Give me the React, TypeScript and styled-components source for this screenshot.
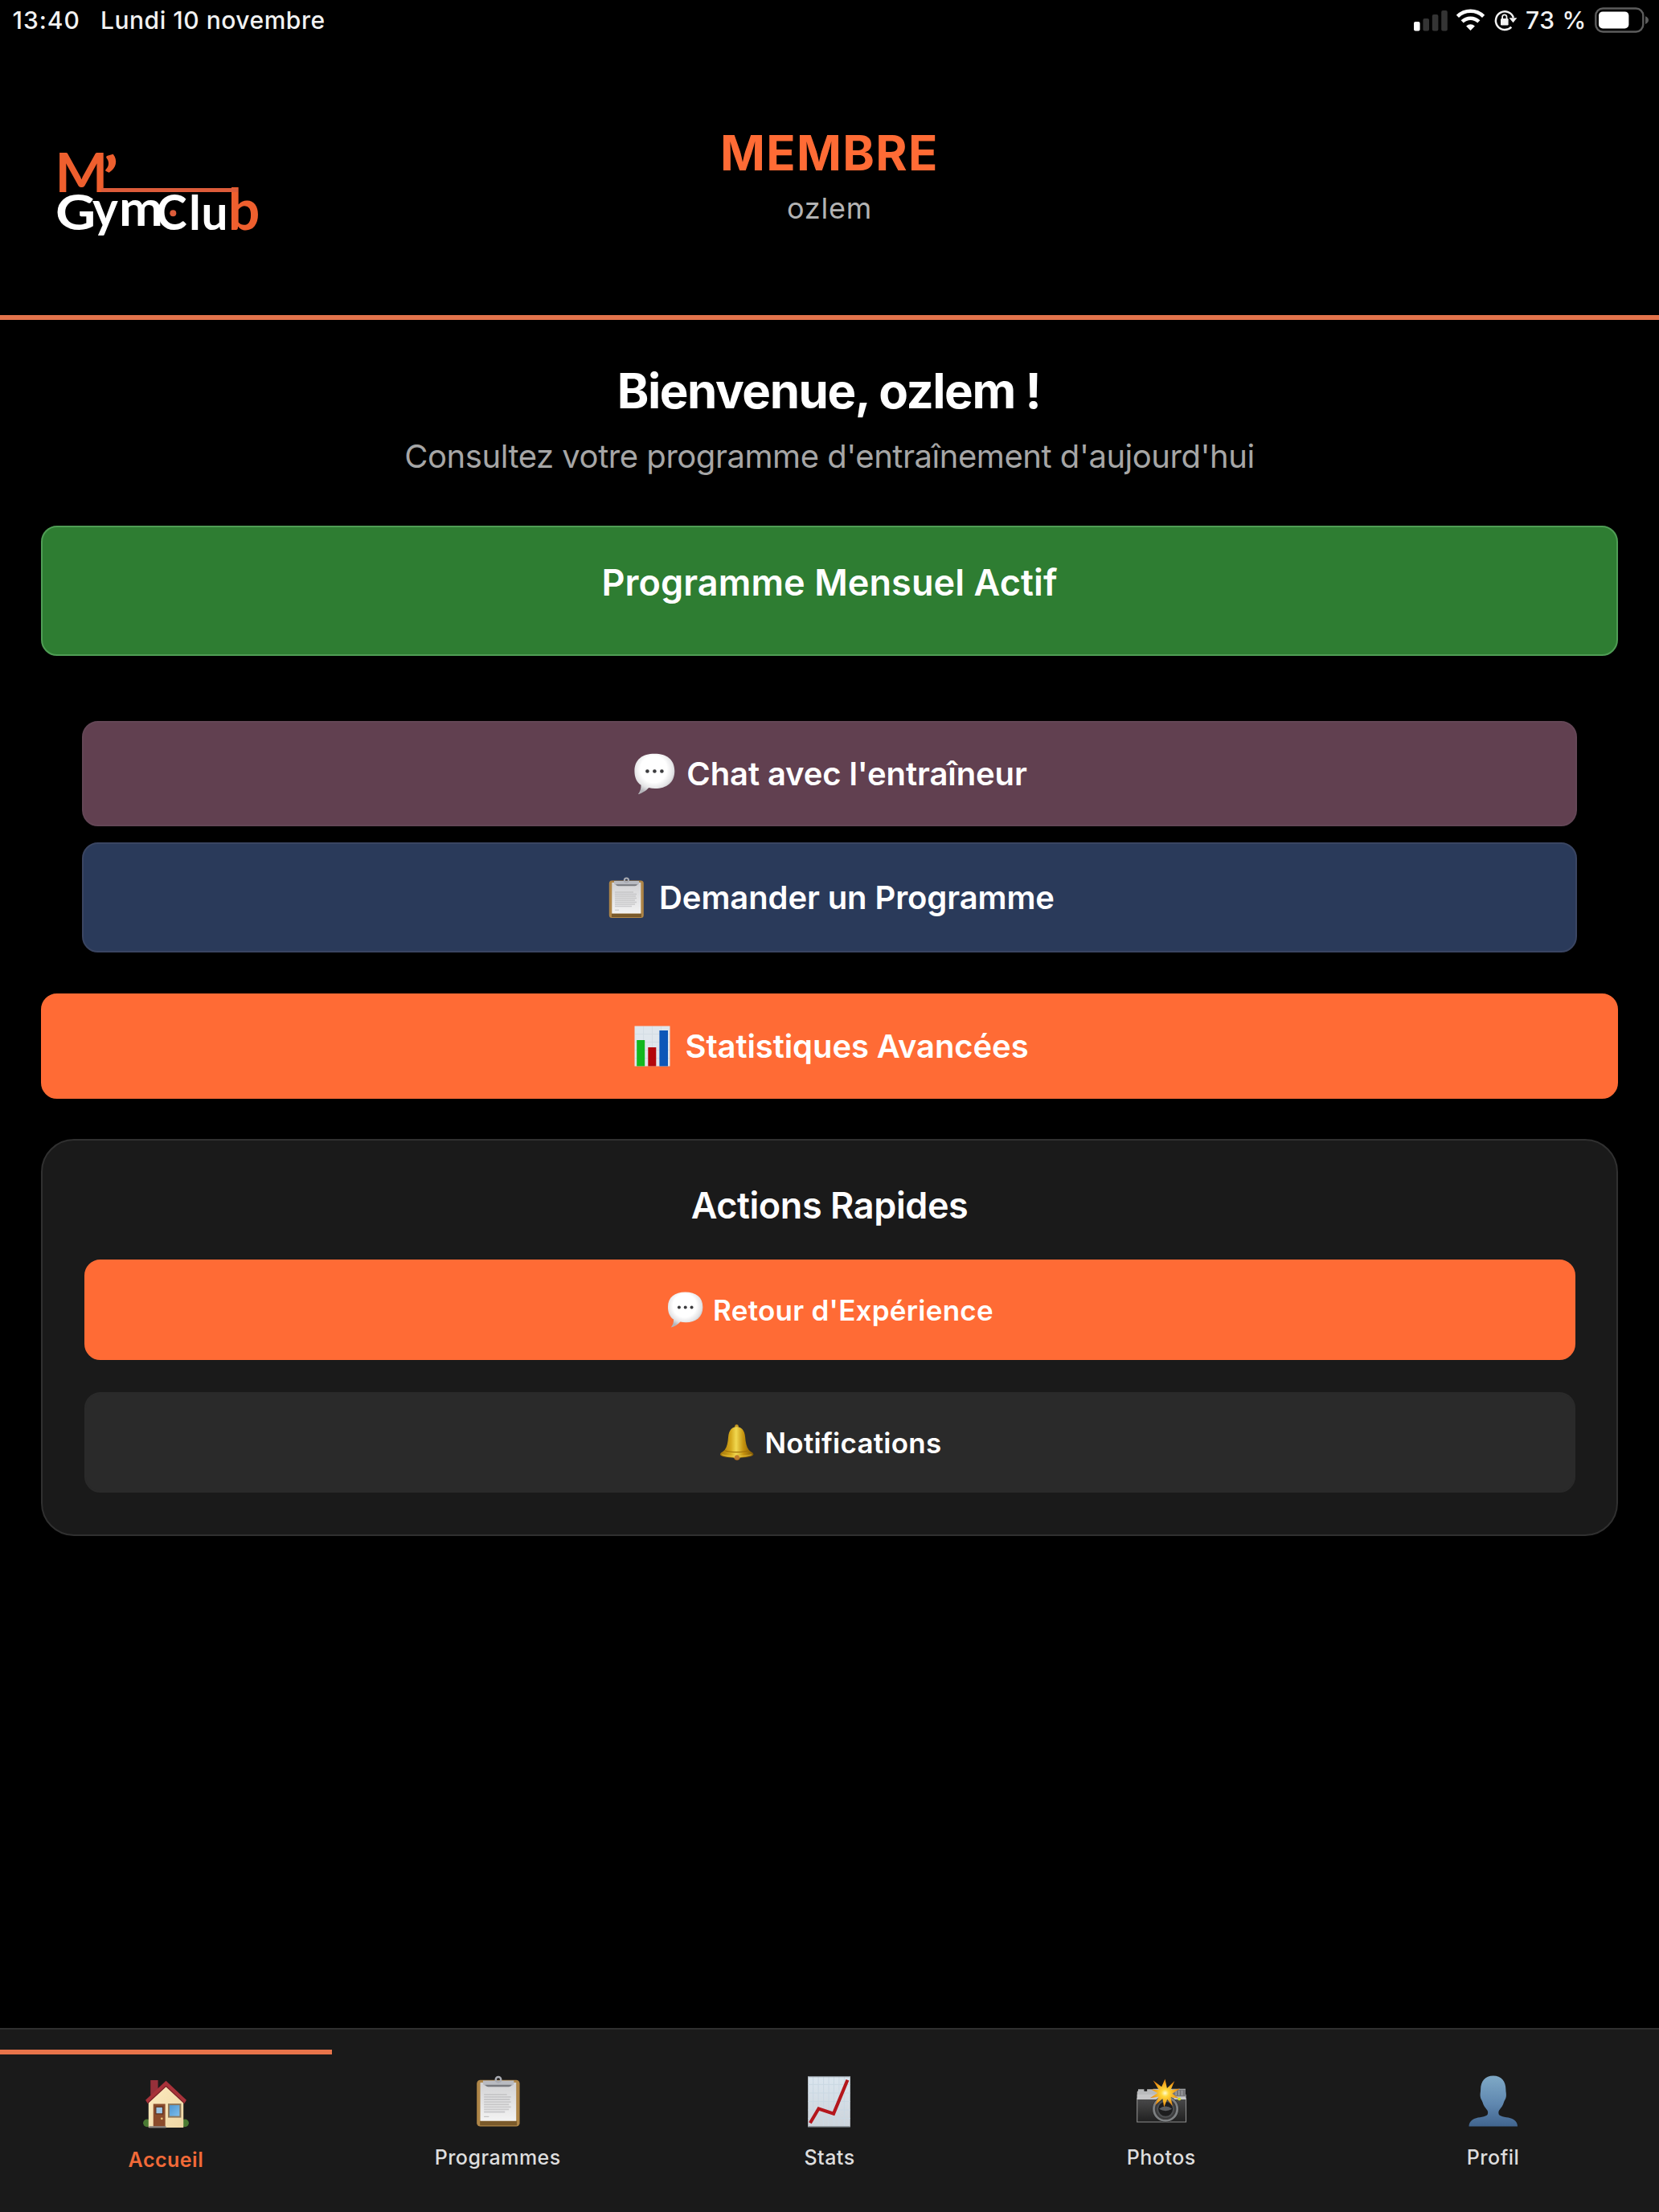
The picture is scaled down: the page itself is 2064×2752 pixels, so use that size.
import React from 'react';
import styled, { createGlobalStyle } from 'styled-components';

const GlobalStyle = createGlobalStyle`
  * {
    box-sizing: border-box;
  }

  body {
    margin: 0;
    background: #000;
    color: #fff;
    font-family: Inter, 'Liberation Sans', sans-serif;
  }

  svg {
    display: block;
    flex-shrink: 0;
  }
`;

const Screen = styled.div`
  display: flex;
  flex-direction: column;
  width: 2064px;
  height: 2752px;
  overflow: hidden;
  background: #000;
`;

const StatusBar = styled.div`
  display: flex;
  align-items: center;
  justify-content: space-between;
  height: 51px;
  padding: 0 12px 1px 15.5px;
  font-size: 30px;
  font-weight: 500;
  line-height: 36px;
  color: #f2f2f2;
`;

const StatusGroup = styled.div<{ $gap: number }>`
  display: flex;
  align-items: center;
  gap: ${({ $gap }) => $gap}px;
`;

const StatusText = styled.span<{ $spacing: number }>`
  letter-spacing: ${({ $spacing }) => $spacing}px;
`;

const Header = styled.header`
  display: grid;
  grid-template-columns: 1fr auto 1fr;
  align-items: start;
  height: 347px;
  padding: 104px 66px 0;
  border-bottom: 6px solid #e3734b;
`;

const LogoSvg = styled.svg`
  margin-top: 9px;
  overflow: visible;
`;

const LogoText = styled.text`
  font-family: Lato, sans-serif;
  font-weight: 700;
`;

const HeaderTitle = styled.div`
  text-align: center;
`;

const Role = styled.h1`
  margin: 0;
  font-size: 60px;
  font-weight: 700;
  line-height: 70px;
  letter-spacing: 1.33px;
  color: #ff6b35;
`;

const UserName = styled.div`
  margin-top: 11.6px;
  font-size: 36px;
  line-height: 44px;
  letter-spacing: 0.8px;
  color: #b3b3b3;
`;

const Main = styled.main`
  display: flex;
  flex-direction: column;
  flex: 1;
  padding: 50px 51px 0;
`;

const Welcome = styled.h2`
  margin: 0;
  padding-right: 2px;
  font-size: 60px;
  font-weight: 700;
  line-height: 76px;
  letter-spacing: -1.45px;
  text-align: center;
`;

const Subtitle = styled.p`
  margin: 19px 0 61px;
  font-size: 40px;
  line-height: 50px;
  letter-spacing: -0.46px;
  text-align: center;
  color: #a6a6a6;
`;

const ProgramBanner = styled.div`
  height: 162px;
  padding-top: 39px;
  border: 2px solid #4f9d55;
  border-radius: 20px;
  background: #2e7d32;
  font-size: 45px;
  font-weight: 600;
  line-height: 60px;
  letter-spacing: 0.1px;
  text-align: center;
`;

const ButtonStack = styled.div`
  display: flex;
  flex-direction: column;
  gap: 20px;
  margin: 81px 0 51px;
  padding: 0 51px;
`;

interface ButtonProps {
  $bg: string;
  $border?: string;
  $height: number;
}

const ActionButton = styled.button<ButtonProps>`
  display: flex;
  align-items: center;
  justify-content: center;
  gap: 14px;
  width: 100%;
  height: ${({ $height }) => $height}px;
  padding: 0;
  border: 2px solid ${({ $border, $bg }) => $border || $bg};
  border-radius: 20px;
  background: ${({ $bg }) => $bg};
  color: #fff;
  font-family: inherit;
  font-size: 40px;
  font-weight: 600;
  line-height: 50px;
  letter-spacing: -0.1px;
  cursor: pointer;
`;

const QuickButton = styled(ActionButton)`
  gap: 12px;
  font-size: 35px;
  line-height: 44px;
  letter-spacing: 0.25px;
`;

const QuickCard = styled.section`
  margin-top: 50px;
  height: 494px;
  padding: 51px 51.5px 0;
  border: 2px solid #303030;
  border-radius: 41px;
  background: #1a1a1a;
`;

const CardTitle = styled.h3`
  margin: 0 0 37px;
  font-size: 45px;
  font-weight: 600;
  line-height: 60px;
  letter-spacing: -0.43px;
  text-align: center;
`;

const QuickList = styled.div`
  display: flex;
  flex-direction: column;
  gap: 40px;
`;

const TabBar = styled.nav`
  display: grid;
  grid-template-columns: repeat(5, 1fr);
  height: 229px;
  padding-top: 25px;
  border-top: 2px solid #2f2f2f;
  background: #1a1a1a;
`;

const Tab = styled.div<{ $active?: boolean }>`
  display: flex;
  flex-direction: column;
  align-items: center;
  gap: 21px;
  padding-top: ${({ $active }) => ($active ? 28 : 31)}px;
  border-top: ${({ $active }) => ($active ? '6px solid #e8744a' : 'none')};
  font-size: 25px;
  font-weight: ${({ $active }) => ($active ? 600 : 500)};
  line-height: 30px;
  letter-spacing: 0.5px;
  color: ${({ $active }) => ($active ? '#f26a38' : '#dedede')};
`;

const Logo = () => (
  <LogoSvg width="264" height="140" viewBox="66 164 264 140">
    <g fill="#ee5f2e">
      <LogoText x="68.4" y="239" fontSize="66.5" textLength="65.8" lengthAdjust="spacingAndGlyphs">M</LogoText>
      <LogoText x="127.3" y="248" fontSize="73" textLength="20.5" lengthAdjust="spacingAndGlyphs">’</LogoText>
      <LogoText x="283.8" y="286" fontSize="70" textLength="39.6" lengthAdjust="spacingAndGlyphs">b</LogoText>
      <rect x="126" y="234" width="170" height="5" fill="#dd5c3a" />
    </g>
    <g fill="#fff">
      <LogoText x="69" y="286" fontSize="60.5" textLength="50.3" lengthAdjust="spacingAndGlyphs">G</LogoText>
      <LogoText x="115" y="282" fontSize="63" textLength="31.8" lengthAdjust="spacingAndGlyphs">y</LogoText>
      <LogoText x="148" y="281" fontSize="62" textLength="55" lengthAdjust="spacingAndGlyphs">m</LogoText>
      <LogoText x="194.3" y="286" fontSize="60.5" textLength="38.4" lengthAdjust="spacingAndGlyphs">C</LogoText>
      <LogoText x="234.9" y="286" fontSize="60">l</LogoText>
      <LogoText x="250.6" y="286" fontSize="60" textLength="33" lengthAdjust="spacingAndGlyphs">u</LogoText>
    </g>
    <circle cx="215.3" cy="265.3" r="4" fill="#dd5c3a" />
  </LogoSvg>
);

const SignalIcon = () => (
  <svg width="42" height="30" viewBox="0 0 42 30">
    <rect x="0" y="17" width="7.6" height="11.5" rx="2" fill="#fff" />
    <rect x="11.4" y="13" width="7.6" height="15.5" rx="2" fill="#343434" />
    <rect x="22.8" y="8" width="7.6" height="20.5" rx="2" fill="#343434" />
    <rect x="34.2" y="3" width="7.6" height="25.5" rx="2" fill="#343434" />
  </svg>
);

const WifiIcon = () => (
  <svg width="37" height="30" viewBox="0 0 37 30" fill="none" stroke="#fff" strokeWidth="4.6">
    <path d="M2.4 10.3a23 23 0 0 1 32.2 0" />
    <path d="M8.2 16.9a14.8 14.8 0 0 1 20.6 0" />
    <path d="M18.5 28l-5.4-5.6a7.8 7.8 0 0 1 10.8 0z" fill="#fff" stroke="none" />
  </svg>
);

const RotationLockIcon = () => (
  <svg width="30" height="30" viewBox="0 0 30 30" fill="none" stroke="#f2f2f2" strokeWidth="2.5">
    <path d="M22.3 23.6A11.3 11.3 0 1 1 24.9 12" />
    <path d="M19.6 12.2h9.8l-4.9 6z" fill="#f2f2f2" stroke="none" />
    <rect x="9" y="13" width="9.6" height="8.4" rx="1.2" fill="#f2f2f2" stroke="none" />
    <path d="M11.1 13.4v-2.4a2.7 2.7 0 0 1 5.4 0v2.4" strokeWidth="1.8" />
  </svg>
);

const BatteryIcon = () => (
  <svg width="68" height="32" viewBox="0 0 68 32">
    <rect x="1.3" y="1.5" width="59" height="29" rx="9" fill="none" stroke="#5c5c5c" strokeWidth="2.4" />
    <rect x="5" y="5.4" width="37.4" height="21" rx="5" fill="#fff" />
    <path d="M63 11.2c5.4 1.8 5.4 8 0 9.8z" fill="#5c5c5c" />
  </svg>
);

interface IconProps {
  size?: number;
}

const ChatIcon: React.FC<IconProps> = ({ size = 54 }) => (
  <svg width={size} height={size} viewBox="0 0 54 54">
    <defs>
      <radialGradient id="bubble" cx="0.48" cy="0.38" r="0.6">
        <stop offset="0.55" stopColor="#fff" />
        <stop offset="0.8" stopColor="#e4e4e6" />
        <stop offset="1" stopColor="#b4b4b9" />
      </radialGradient>
    </defs>
    <path
      d="M28.300 1.800C43.500 1.800 53.300 9 53.300 23.200 53.300 37.500 43.500 45 29 45c-2.800 0-5.500-.3-7.800-.9C18 47.800 12.500 51.200 7.800 52.300c2.400-3.300 3.900-6.800 3.700-11.500C6.300 37.500 3.400 31.500 3.400 23.200 3.400 9 13.200 1.800 28.300 1.800z"
      fill="url(#bubble)"
    />
    <circle cx="19.400" cy="23.500" r="2.300" fill="#3c3c3e" />
    <circle cx="28.400" cy="23.500" r="2.300" fill="#3c3c3e" />
    <circle cx="37.400" cy="23.500" r="2.300" fill="#3c3c3e" />
  </svg>
);

const ClipboardIcon: React.FC<IconProps> = ({ size = 54 }) => (
  <svg width={size} height={size} viewBox="0 0 54 54">
    <defs>
      <linearGradient id="paper" x1="0" y1="0" x2="0" y2="1">
        <stop offset="0" stopColor="#d2d2d4" />
        <stop offset="1" stopColor="#f3f3f3" />
      </linearGradient>
    </defs>
    <rect x="5.800" y="5.500" width="43" height="46.500" rx="3.500" fill="#ae8547" />
    <rect x="9" y="46.500" width="37" height="4.500" fill="#7a5a2b" />
    <rect x="9.300" y="8" width="36" height="38.500" fill="url(#paper)" />
    <path d="M12 6h31v2.500q0 3-4 3H16q-4 0-4-3z" fill="#b9bbc1" />
    <path d="M14 10.200q1 2 3 2h21q2 0 3-2z" fill="#77797e" />
    <circle cx="27.400" cy="5" r="2.600" fill="none" stroke="#a9abb2" strokeWidth="2" />
    <path
      d="M13 20h23M13 22.500h27M13 25h26M13 27.500h27M13 30h25M13 32.500h27M13 35h25M13 37.500h21"
      stroke="#bdbdbf"
      strokeWidth="1.500"
      opacity="0.7"
    />
    <path d="M13 42.200h5" stroke="#c4c4c4" strokeWidth="1" />
  </svg>
);

const BarChartIcon: React.FC<IconProps> = ({ size = 54 }) => (
  <svg width={size} height={size} viewBox="0 0 54 54">
    <rect x="5.500" y="1.500" width="44" height="50" fill="#dfe6ec" />
    <path d="M16.500 2v49M27.500 2v49M38.500 2v49M6 11.500h43M6 21.500h43M6 31.500h43M6 41.500h43" stroke="#d4dde4" strokeWidth="1" />
    <rect x="8.200" y="19" width="10" height="32.500" fill="#12b81f" />
    <rect x="22.300" y="28" width="10" height="23.500" fill="#b3060b" />
    <rect x="36.400" y="7" width="10.600" height="44.500" fill="#0d57b8" />
  </svg>
);

const BellIcon: React.FC<IconProps> = ({ size = 54 }) => (
  <svg width={size} height={size} viewBox="0 0 54 54">
    <defs>
      <linearGradient id="brass" x1="0" y1="0" x2="1" y2="0">
        <stop offset="0" stopColor="#a07208" />
        <stop offset="0.32" stopColor="#d6a91c" />
        <stop offset="0.48" stopColor="#f1d850" />
        <stop offset="0.7" stopColor="#c4920e" />
        <stop offset="1" stopColor="#7d5506" />
      </linearGradient>
    </defs>
    <circle cx="27" cy="4.200" r="2.700" fill="#c99a22" />
    <circle cx="27.500" cy="47.500" r="5" fill="#9c5f18" />
    <path
      d="M27 5c8 0 11.500 6 12.200 14.500.6 7.500 1.800 14 5.300 18.500 2.300 2.800 6.500 3.500 6.500 6.300 0 3-11 4.700-24 4.700S3.500 47.300 3.500 44.300c0-2.800 4-3.500 6.300-6.300 3.500-4.500 4.600-11 5.200-18.500C15.600 11 19 5 27 5z"
      fill="url(#brass)"
    />
    <path d="M9.800 38.500c8 3.200 26.400 3.200 34.500 0" fill="none" stroke="#a0700a" strokeWidth="1.500" />
    <path d="M6 44.500c9 2.800 33 2.800 42.500 0" fill="none" stroke="#f0cf4a" strokeWidth="1.400" opacity="0.6" />
    <circle cx="27.500" cy="48.500" r="3.400" fill="#bd7a2c" />
  </svg>
);

const HouseIcon: React.FC<IconProps> = ({ size = 54 }) => (
  <svg width={size} height={size} viewBox="0 0 54 54">
    <defs>
      <linearGradient id="wall" x1="0" y1="0" x2="1" y2="1">
        <stop offset="0" stopColor="#fdebc0" />
        <stop offset="1" stopColor="#eed6a4" />
      </linearGradient>
      <linearGradient id="pane" x1="0" y1="0" x2="1" y2="1">
        <stop offset="0" stopColor="#4c93cf" />
        <stop offset="1" stopColor="#7fc0ec" />
      </linearGradient>
    </defs>
    <circle cx="8" cy="46.200" r="3.900" fill="#4a7a33" />
    <circle cx="46" cy="46.200" r="3.900" fill="#4a7a33" />
    <rect x="11.500" y="3.200" width="7.500" height="15" fill="#96303a" />
    <path d="M27 7.500l17.500 17v26.300h-35V24.500z" fill="url(#wall)" />
    <path d="M27 3.800L6.500 23.200l2 3.200L27 9.300l18.500 17.100 2-3.200z" fill="#a8323a" />
    <path d="M27 9.300L8.500 26.400M27 9.300l18.500 17.100" stroke="#7c2228" strokeWidth="1" />
    <rect x="14.300" y="27" width="12" height="23" fill="#8a4b2c" />
    <rect x="16.800" y="30" width="7" height="7" fill="#9cc3e2" stroke="#5e3220" />
    <circle cx="22.800" cy="41.800" r="1.100" fill="#e9c577" />
    <rect x="29.800" y="27.500" width="11.600" height="12.500" fill="url(#pane)" stroke="#8d7658" strokeWidth="1.600" />
    <rect x="10" y="49.300" width="17" height="1.800" fill="#8b8580" />
  </svg>
);

const TrendIcon: React.FC<IconProps> = ({ size = 54 }) => (
  <svg width={size} height={size} viewBox="0 0 54 54">
    <defs>
      <linearGradient id="sheet" x1="0" y1="0" x2="0" y2="1">
        <stop offset="0" stopColor="#dbe6ef" />
        <stop offset="1" stopColor="#ccd3da" />
      </linearGradient>
    </defs>
    <rect x="5.800" y="1.600" width="42.400" height="51" fill="url(#sheet)" />
    <path
      d="M11 2v50M16.200 2v50M21.400 2v50M26.600 2v50M31.800 2v50M37 2v50M42.200 2v50M6 10h42M6 18.500h42M6 27h42M6 35.500h42M6 44h42"
      stroke="#cad8e3"
      strokeWidth="0.800"
    />
    <path d="M8 48.500l8.500-14.300 15 5L45.500 5.500" fill="none" stroke="#b4161c" strokeWidth="3.300" />
    <path d="M5.800 2.100h42.400M5.800 52.100h42.400" stroke="#8f979e" strokeWidth="1" />
  </svg>
);

const CameraIcon: React.FC<IconProps> = ({ size = 54 }) => (
  <svg width={size} height={size} viewBox="0 0 54 54">
    <defs>
      <linearGradient id="leather" x1="0" y1="0" x2="0" y2="1">
        <stop offset="0" stopColor="#4a4a4b" />
        <stop offset="1" stopColor="#202020" />
      </linearGradient>
      <radialGradient id="flash">
        <stop offset="0" stopColor="#fffbd0" />
        <stop offset="0.25" stopColor="#ffd83c" />
        <stop offset="1" stopColor="#e8820a" />
      </radialGradient>
    </defs>
    <path d="M3 24h49v23.500H3z" fill="url(#leather)" stroke="#8d8d8d" strokeWidth="0.900" />
    <path d="M3 17.500q0-1 1-1v-1.800h6v2h3v-2h6v-.3h32.500V25H3z" fill="#b9babc" />
    <path d="M3 20h49v5H3z" fill="#c6c6c8" />
    <path d="M38 15h13.500v7H38z" fill="#77777a" />
    <path d="M42 16v5M45 16v5M48 16v5" stroke="#a5a5a8" strokeWidth="1" />
    <circle cx="31.500" cy="34.500" r="13.300" fill="#222" />
    <circle cx="31.500" cy="34.500" r="11.800" fill="#3b3b3c" stroke="#7d8082" strokeWidth="2.200" />
    <circle cx="31.500" cy="34.500" r="8" fill="#1d1d1e" stroke="#4e5052" strokeWidth="1.500" />
    <path d="M25 34.500q6.500-5.500 13 0-6.500 4-13 0z" fill="#5b5d60" />
    <circle cx="45.300" cy="24.500" r="1.500" fill="#d5dc20" />
    <path
      d="M31 4.500l2 9.300 7.500-7.300-3.800 9 9.300-1.300-7.800 5 6.500 4.500-8-1 1.800 9-5.300-7-3.200 8-1.500-8.500-7.500 6.500 3.500-8.500-8.500 1.300 7.500-5-6.500-3.500 7.800.3-5.800-9.500 8.500 6.500z"
      fill="url(#flash)"
    />
  </svg>
);

const PersonIcon: React.FC<IconProps> = ({ size = 54 }) => (
  <svg width={size} height={size} viewBox="0 0 54 54">
    <defs>
      <linearGradient id="bust" x1="0" y1="0" x2="0" y2="1">
        <stop offset="0" stopColor="#7fa9c6" />
        <stop offset="0.55" stopColor="#6088b0" />
        <stop offset="1" stopColor="#41658f" />
      </linearGradient>
    </defs>
    <path
      d="M27.200 1.200C35.500 1.200 39.800 7 39.800 15c0 2.500.6 4 .4 6.500-.3 3-1.700 4-2.200 6-1 4-3 6-5 8.500-.8 1.500-.7 4 .7 5 3 2.200 10 1.500 14.300 4.300 2.500 1.600 3.600 4 3.600 6.700H2.800c0-2.700 1.100-5.100 3.600-6.700C10.700 42.500 17.700 43.200 20.700 41c1.400-1 1.500-3.500.7-5-2-2.500-4-4.500-5-8.500-.5-2-1.900-3-2.200-6-.2-2.500.4-4 .4-6.500C14.600 7 19 1.200 27.200 1.200z"
      fill="url(#bust)"
    />
  </svg>
);

const tabs = [
  { label: 'Accueil', icon: HouseIcon, active: true },
  { label: 'Programmes', icon: ClipboardIcon },
  { label: 'Stats', icon: TrendIcon },
  { label: 'Photos', icon: CameraIcon },
  { label: 'Profil', icon: PersonIcon },
];

const App: React.FC = () => {
  return (
    <Screen>
      <GlobalStyle />
      <StatusBar>
        <StatusGroup $gap={25}>
          <StatusText $spacing={1}>13:40</StatusText>
          <StatusText $spacing={0.53}>Lundi 10 novembre</StatusText>
        </StatusGroup>
        <StatusGroup $gap={10}>
          <SignalIcon />
          <WifiIcon />
          <RotationLockIcon />
          <StatusText $spacing={0.7}>73 %</StatusText>
          <BatteryIcon />
        </StatusGroup>
      </StatusBar>

      <Header>
        <Logo />
        <HeaderTitle>
          <Role>MEMBRE</Role>
          <UserName>ozlem</UserName>
        </HeaderTitle>
      </Header>

      <Main>
        <Welcome>Bienvenue, ozlem !</Welcome>
        <Subtitle>Consultez votre programme d'entraînement d'aujourd'hui</Subtitle>

        <ProgramBanner>Programme Mensuel Actif</ProgramBanner>

        <ButtonStack>
          <ActionButton $bg="#614050" $border="#644656" $height={131}>
            <ChatIcon />
            Chat avec l'entraîneur
          </ActionButton>
          <ActionButton $bg="#2a3a5a" $border="#3a4562" $height={137}>
            <ClipboardIcon />
            Demander un Programme
          </ActionButton>
        </ButtonStack>

        <ActionButton $bg="#ff6b35" $height={131}>
          <BarChartIcon />
          Statistiques Avancées
        </ActionButton>

        <QuickCard>
          <CardTitle>Actions Rapides</CardTitle>
          <QuickList>
            <QuickButton $bg="#ff6b35" $height={125}>
              <ChatIcon size={47} />
              Retour d'Expérience
            </QuickButton>
            <QuickButton $bg="#2a2a2a" $height={125}>
              <BellIcon size={47} />
              Notifications
            </QuickButton>
          </QuickList>
        </QuickCard>
      </Main>

      <TabBar>
        {tabs.map(({ label, icon: Icon, active }) => (
          <Tab key={label} $active={active}>
            <Icon size={67} />
            {label}
          </Tab>
        ))}
      </TabBar>
    </Screen>
  );
};

export default App;
